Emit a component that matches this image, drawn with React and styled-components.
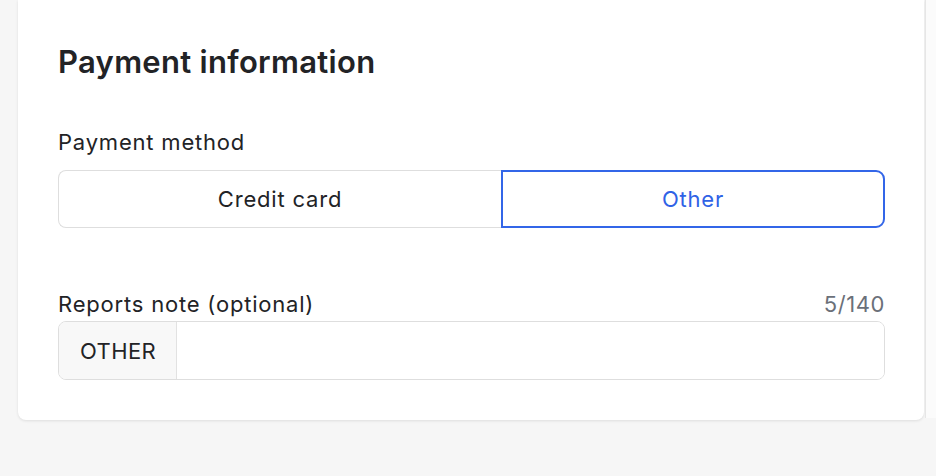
import React, { useState } from "react";
import styled, { createGlobalStyle } from "styled-components";

const GlobalStyle = createGlobalStyle`
  html, body {
    margin: 0;
    padding: 0;
    background: #f6f6f6;
  }
  body {
    font-family: "Inter", "Noto Sans", sans-serif;
    color: #222326;
  }
`;

const METHODS = ["Credit card", "Other"];
const MAX_NOTE = 140;

const App = () => {
  const [method, setMethod] = useState("Other");
  const [note, setNote] = useState("");
  const prefix = method === "Other" ? "OTHER" : "CARD";
  const count = prefix.length + note.length;

  return (
    <>
      <GlobalStyle />
      <PageLayout>
        <Card>
          <Title>Payment information</Title>

          <Field>
            <Label>Payment method</Label>
            <Segmented>
              {METHODS.map((m) => (
                <Segment
                  key={m}
                  type="button"
                  $active={m === method}
                  onClick={() => setMethod(m)}
                >
                  {m}
                </Segment>
              ))}
            </Segmented>
          </Field>

          <Field $spaced>
            <LabelRow>
              <Label>Reports note (optional)</Label>
              <Counter>
                {count}/{MAX_NOTE}
              </Counter>
            </LabelRow>
            <InputGroup>
              <Prefix>{prefix}</Prefix>
              <NoteInput
                value={note}
                maxLength={MAX_NOTE - prefix.length}
                onChange={(e) => setNote(e.target.value)}
              />
            </InputGroup>
          </Field>
        </Card>
        <SidePanel />
      </PageLayout>
    </>
  );
};

const PageLayout = styled.div`
  display: flex;
  align-items: flex-start;
  padding-left: 18px;
  height: 476px;
  box-sizing: border-box;
`;

const Card = styled.section`
  width: 906px;
  box-sizing: border-box;
  background: #fff;
  border-radius: 0 0 8px 8px;
  box-shadow: 0 1px 3px rgba(0, 0, 0, 0.1);
  padding: 42px 39px 40px 40px;
`;

const SidePanel = styled.div`
  flex: 1;
  height: 418px;
  margin-left: 1px;
  background: #fbfbfb;
  border-left: 1px solid #e6e6e6;
`;

const Title = styled.h2`
  margin: 0 0 47px;
  font-size: 31px;
  line-height: 40px;
  font-weight: 600;
  letter-spacing: 0.3px;
  color: #222326;
`;

const Field = styled.div`
  display: flex;
  flex-direction: column;
  gap: ${(p) => (p.$spaced ? "4px" : "15px")};
  margin-top: ${(p) => (p.$spaced ? "63px" : "0")};
`;

const LabelRow = styled.div`
  display: flex;
  justify-content: space-between;
  align-items: baseline;
`;

const Label = styled.label`
  font-size: 22px;
  line-height: 26px;
  letter-spacing: 0.8px;
  color: #222326;
`;

const Counter = styled.span`
  font-size: 22px;
  line-height: 26px;
  letter-spacing: 0.6px;
  color: #6b7079;
`;

const Segmented = styled.div`
  display: grid;
  grid-template-columns: 443px 1fr;
  height: 58px;
`;

const Segment = styled.button`
  font-family: inherit;
  font-size: 22px;
  letter-spacing: 0.8px;
  background: #fff;
  cursor: pointer;
  padding: 0;
  color: ${(p) => (p.$active ? "#2f62e6" : "#222326")};
  border: ${(p) => (p.$active ? "2px solid #3366e8" : "1px solid #dedede")};

  &:first-child {
    border-radius: 8px 0 0 8px;
    border-right: none;
  }
  &:last-child {
    border-radius: 0 9px 9px 0;
  }
`;

const InputGroup = styled.div`
  display: flex;
  height: 59px;
  box-sizing: border-box;
  border: 1px solid #dedede;
  border-radius: 8px;
  overflow: hidden;
`;

const Prefix = styled.span`
  display: flex;
  align-items: center;
  padding: 0 20px 0 21px;
  background: #f8f8f8;
  border-right: 1px solid #e2e2e2;
  font-size: 22px;
  letter-spacing: 0.4px;
  color: #222326;
`;

const NoteInput = styled.input`
  flex: 1;
  border: none;
  outline: none;
  padding: 0 16px;
  font-family: inherit;
  font-size: 22px;
  color: #222326;
  background: #fff;
`;

export default App;
